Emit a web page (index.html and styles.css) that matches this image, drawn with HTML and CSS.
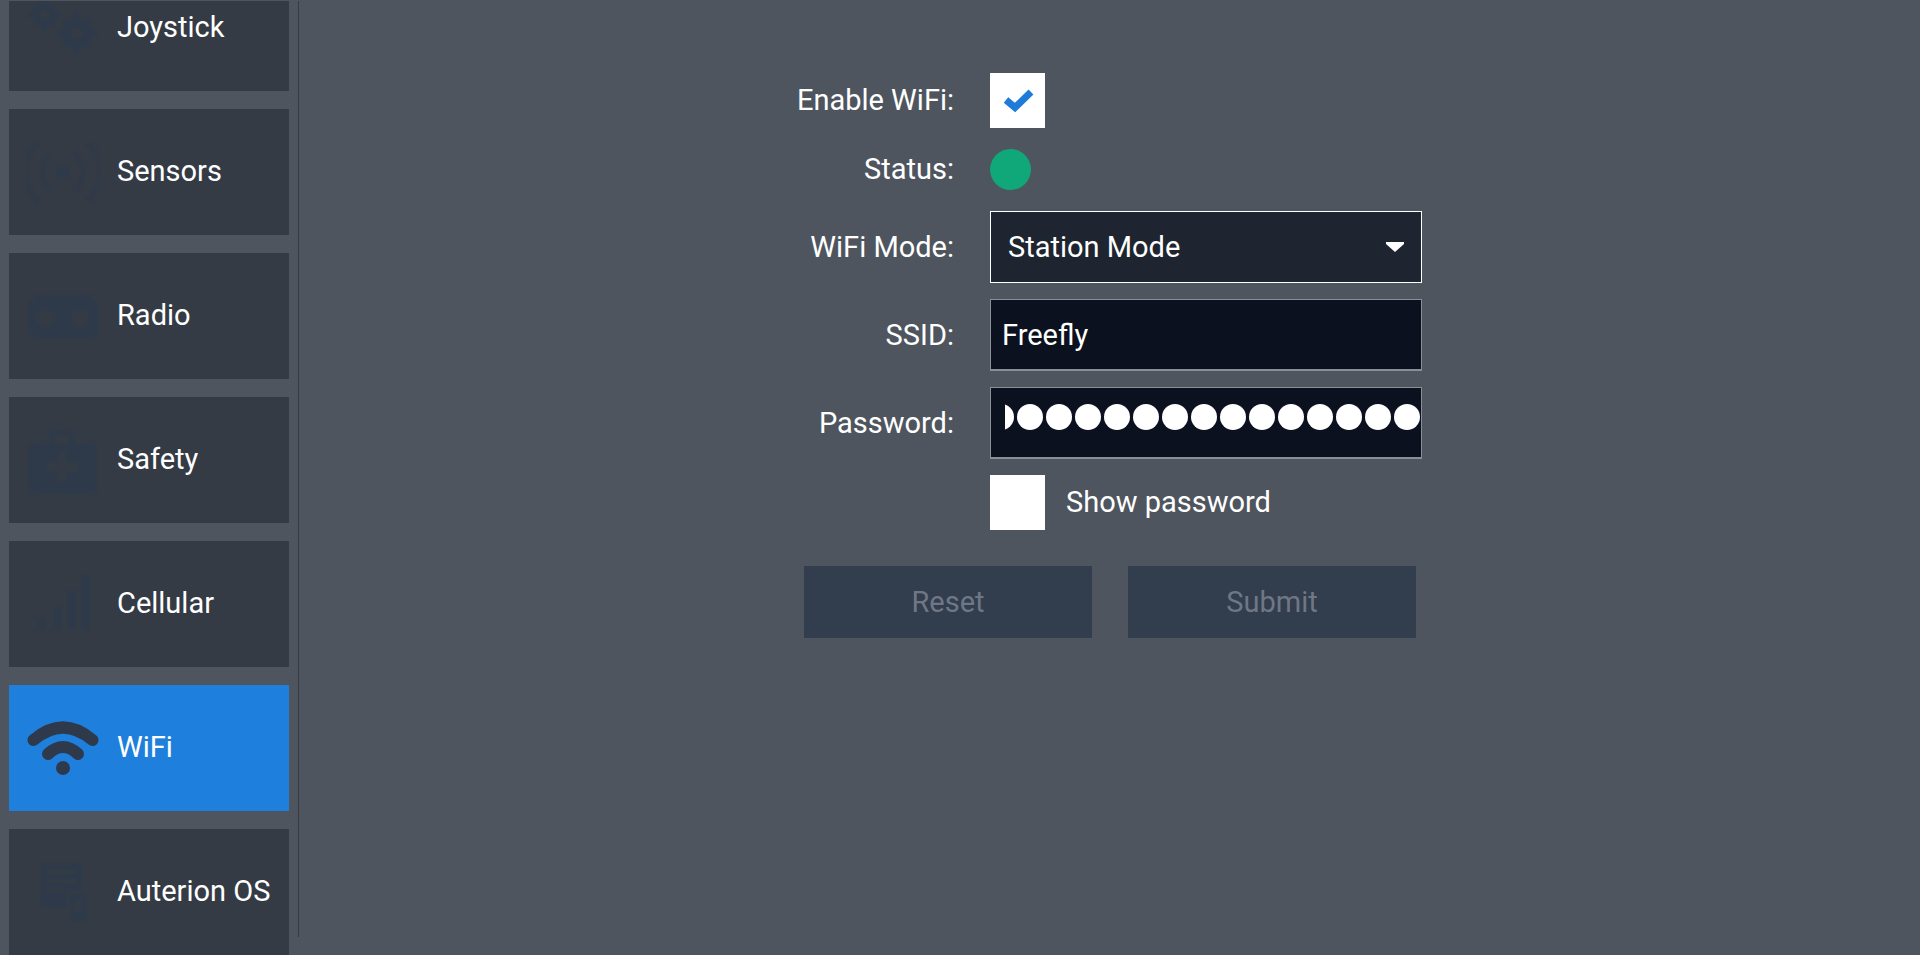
FILE: index.html
```html
<!DOCTYPE html>
<html lang="en">
<head>
  <meta charset="UTF-8" />
  <title>WiFi settings</title>
  <link rel="stylesheet" href="styles.css">
</head>
<body>

  <aside class="sidebar">
    <nav class="menu">
      <a class="menu-item">
        <svg class="menu-icon" viewBox="0 0 72 72"><g transform="translate(18 23)"><circle r="13"/><path d="M-3-17h6v5h-6zM-3 12h6v5h-6zM-17-3h5v6h-5zM12-3h5v6h-5z"/><circle class="hole" r="5"/></g><g transform="translate(50 41)"><circle r="16"/><path d="M-3-21h6v6h-6zM-3 15h6v6h-6zM-21-3h6v6h-6zM15-3h6v6h-6zM-15-11l4-4 5 5-4 4zM11-15l4 4-5 5-4-4zM-11 15l-4-4 5-5 4 4zM15 11l-4 4-5-5 4-4z"/><circle class="hole" r="6"/></g></svg>
        <span>Joystick</span>
      </a>
      <a class="menu-item">
        <svg class="menu-icon" viewBox="0 0 72 72"><circle cx="36" cy="36" r="7"/><g class="arc"><path d="M24 18a24 24 0 0 0 0 36M48 18a24 24 0 0 1 0 36"/><path d="M12 7a38 38 0 0 0 0 58M60 7a38 38 0 0 1 0 58"/></g></svg>
        <span>Sensors</span>
      </a>
      <a class="menu-item">
        <svg class="menu-icon" viewBox="0 0 72 72"><path fill-rule="evenodd" d="M6 20l2-5h56l2 5q5 1 5 6v26q0 6-6 6H7q-6 0-6-6V26q0-5 5-6zM18 29a9 9 0 1 0 .01 0zM53 29a9 9 0 1 0 .01 0z"/></svg>
        <span>Radio</span>
      </a>
      <a class="menu-item">
        <svg class="menu-icon" viewBox="0 0 72 72"><path fill-rule="evenodd" d="M21 19v-8q0-5 5-5h17q5 0 5 5v8h17q5 0 5 5v41q0 5-5 5H6q-5 0-5-5V24q0-5 5-5zM27 11v8h15v-8zM31 28v11H20v8h11v11h8V47h11v-8H39V28z"/></svg>
        <span>Safety</span>
      </a>
      <a class="menu-item">
        <svg class="menu-icon" viewBox="0 0 72 72"><path d="M10 62h9V50h-9zM26 62h9V38h-9zM40 62h9V22h-9zM54 62h9V7h-9z"/></svg>
        <span>Cellular</span>
      </a>
      <a class="menu-item active">
        <svg class="menu-icon" viewBox="0 0 72 72"><g class="wave"><path d="M6.500 28Q36 3 65.500 28"/><path d="M21 42Q36 28 51 42"/></g><circle cx="36" cy="56" r="7"/></svg>
        <span>WiFi</span>
      </a>
      <a class="menu-item">
        <svg class="menu-icon" viewBox="0 0 72 72"><path fill-rule="evenodd" d="M13 7h42v27H40v18H13zM19 14v4h30v-4zM19 23v4h30v-4zM19 32v4h16v-4z"/><path fill-rule="evenodd" d="M43 37h17v29H43zM48 45v10h7V45z"/></svg>
        <span>Auterion OS</span>
      </a>
    </nav>
    <div class="divider"></div>
  </aside>

  <main class="content">
    <form class="wifi-form">
      <label class="field-label short">Enable WiFi:</label>
      <div class="checkbox">
        <svg viewBox="0 0 32 26"><path d="M4 12l9 7.500L29 4" fill="none" stroke="#1e7bd8" stroke-width="7"/></svg>
      </div>

      <label class="field-label short">Status:</label>
      <div class="status-dot"></div>

      <label class="field-label">WiFi Mode:</label>
      <div class="combo">
        <span>Station Mode</span>
        <svg class="combo-arrow" viewBox="0 0 18 10"><path d="M0 0h18v2l-9 8-9-8z" fill="#fff"/></svg>
      </div>

      <label class="field-label">SSID:</label>
      <div class="text-input">Freefly</div>

      <label class="field-label">Password:</label>
      <div class="text-input">
        <div class="dots">
          <i></i><i></i><i></i><i></i><i></i><i></i><i></i><i></i><i></i><i></i><i></i><i></i><i></i><i></i><i></i><i></i>
        </div>
      </div>

      <span></span>
      <div class="show-password">
        <div class="checkbox"></div>
        <span>Show password</span>
      </div>
    </form>

    <div class="actions">
      <button class="btn" disabled>Reset</button>
      <button class="btn" disabled>Submit</button>
    </div>
  </main>

</body>
</html>
```

FILE: styles.css
```css
* {
  box-sizing: border-box;
}

html, body {
  height: 100%;
}

body {
  margin: 0;
  display: flex;
  overflow: hidden;
  background: #4e555e;
  color: #fff;
  font-family: Roboto, "Liberation Sans", sans-serif;
  font-size: 29px;
}

/* Sidebar */
.sidebar {
  flex: 0 0 299px;
  height: 100%;
  display: flex;
  padding-top: 1px;
}

.menu {
  flex: 0 0 289px;
  margin-left: 9px;
  width: 280px;
  overflow: hidden;
  display: flex;
  flex-direction: column;
  gap: 18px;
}

.menu-item {
  flex: 0 0 126px;
  display: flex;
  align-items: center;
  gap: 18px;
  padding-left: 18px;
  background: #343b45;
  width: 280px;
}

.menu-item span {
  margin-bottom: 2px;
}

.menu-item:first-child {
  margin-top: -36px;
}

.menu-icon {
  flex: 0 0 72px;
  width: 72px;
  height: 72px;
  fill: #2e3a4b;
  filter: blur(1px);
  opacity: 0.85;
}

.menu-icon .hole {
  fill: #343b45;
}

.menu-icon .arc {
  fill: none;
  stroke: #2e3a4b;
  stroke-width: 5;
  opacity: 0.7;
}

.menu-icon .wave {
  fill: none;
  stroke: #2e3a4b;
  stroke-width: 12;
  stroke-linecap: round;
}

.menu-item.active {
  background: #1e7fdc;
}

.menu-item.active .menu-icon {
  filter: none;
  opacity: 1;
}

.divider {
  width: 1px;
  height: 936px;
  background: #343b45;
}

/* Form */
.content {
  flex: 1;
  padding: 73px 0 0 505px;
}

.wifi-form {
  display: grid;
  grid-template-columns: 150px 432px;
  column-gap: 36px;
  row-gap: 16px;
  align-items: center;
}

.field-label {
  justify-self: end;
  white-space: nowrap;
}

.field-label.short {
  padding-bottom: 2px;
}

.checkbox {
  width: 55px;
  height: 55px;
  background: #fff;
  display: flex;
  align-items: center;
  justify-content: center;
}

.checkbox svg {
  width: 32px;
  height: 26px;
}

.status-dot {
  width: 41px;
  height: 41px;
  border-radius: 50%;
  background: #10a878;
  margin: 5px 0;
}

.combo {
  height: 72px;
  display: flex;
  align-items: center;
  justify-content: space-between;
  padding: 0 17px;
  background: #1e2530;
  border: 1px solid #fff;
}

.combo-arrow {
  width: 18px;
  height: 10px;
}

.text-input {
  height: 72px;
  display: flex;
  align-items: center;
  padding: 0 1px 0 11px;
  background: #0b111e;
  border: 1px solid #8a8f96;
  border-bottom-width: 2px;
}

.dots {
  flex: 1;
  margin-left: 3px;
  display: flex;
  justify-content: flex-end;
  gap: 3px;
  overflow: hidden;
  padding-bottom: 12px;
}

.dots i {
  flex: 0 0 26px;
  height: 26px;
  border-radius: 50%;
  background: #fff;
}

.show-password {
  display: flex;
  align-items: center;
  gap: 21px;
}

.show-password span {
  margin-bottom: 2px;
}

.actions {
  display: flex;
  gap: 36px;
  margin-top: 36px;
}

.btn {
  width: 288px;
  height: 72px;
  border: none;
  background: #323d4e;
  color: #6f7784;
  font: inherit;
}
```
